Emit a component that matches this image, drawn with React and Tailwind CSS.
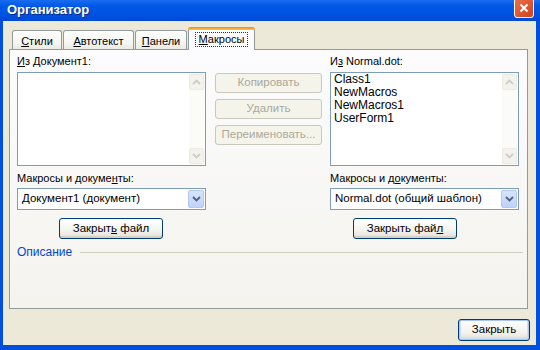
import React from "react";

function Chevron({ up, color }) {
  return (
    <svg width="9" height="6" viewBox="0 0 9 6">
      <path
        d={up ? "M1 5 L4.5 1.5 L8 5" : "M1 1 L4.5 4.5 L8 1"}
        fill="none"
        stroke={color}
        strokeWidth="1.8"
      />
    </svg>
  );
}

function ScrollBar() {
  return (
    <div className="w-[16px] h-full flex flex-col justify-between bg-[#fbfbf8] py-px pr-px">
      <div className="w-[15px] h-[16px] rounded-[2px] border border-[#ebeae3] bg-[#f3f2ec] flex items-center justify-center">
        <Chevron up color="#cdccc5" />
      </div>
      <div className="w-[15px] h-[16px] rounded-[2px] border border-[#ebeae3] bg-[#f3f2ec] flex items-center justify-center">
        <Chevron color="#cdccc5" />
      </div>
    </div>
  );
}

function ListBox({ items }) {
  return (
    <div className="mt-[4px] h-[94px] border border-[#7f9db9] bg-white flex">
      <div className="flex-1 pl-[3px] text-[12px] leading-[13px]">
        {items.map((it) => (
          <div key={it}>{it}</div>
        ))}
      </div>
      <ScrollBar />
    </div>
  );
}

function Combo({ text }) {
  return (
    <div className="mt-[3px] h-[22px] border border-[#7f9db9] bg-white flex items-center">
      <div className="flex-1 pl-[4px] text-[11.5px]">{text}</div>
      <div className="h-full py-px pr-px">
        <div className="w-[16px] h-full rounded-[2px] border border-[#b4c8f6] bg-[linear-gradient(to_bottom,#d8e4fd,#bfd2fb)] flex items-center justify-center">
          <Chevron color="#4d6185" />
        </div>
      </div>
    </div>
  );
}

function XpButton({ children, className = "", disabled = false, isDefault = false }) {
  if (disabled) {
    return (
      <div
        className={`h-[20px] rounded-[3px] border border-[#cac8bb] bg-[#f5f4ea] text-[#aca899] flex items-center justify-center ${className}`}
      >
        <span>{children}</span>
      </div>
    );
  }
  return (
    <div
      className={`rounded-[3px] border border-[#003c74] bg-[linear-gradient(to_bottom,#ffffff,#f4f3ee_60%,#e3e0d4)] flex items-center justify-center ${
        isDefault ? "shadow-[inset_0_0_0_1px_#a7c4f5,inset_0_-1px_0_2px_#cfdefb]" : "shadow-[inset_0_-2px_0_#d6d0c5]"
      } ${className}`}
    >
      <span>{children}</span>
    </div>
  );
}

function Tab({ children, active, className = "" }) {
  if (active) {
    return (
      <div
        className={`relative z-10 h-[23px] rounded-t-[3px] border-x border-[#919b9c] bg-[#fcfcfe] flex flex-col ${className}`}
      >
        <div className="h-[3px] -mx-px rounded-t-[3px] bg-[linear-gradient(to_bottom,#e68b2c,#ffc73c)]" />
        <div className="flex-1 flex items-center justify-center pb-[2px]">
          <span className="border border-dotted border-[#333] px-[3px] leading-[13px]">{children}</span>
        </div>
      </div>
    );
  }
  return (
    <div
      className={`h-[20px] rounded-t-[3px] border border-b-0 border-[#919b9c] bg-[linear-gradient(to_bottom,#ffffff,#f3f3ef_70%,#e9e8e0)] flex items-center justify-center pt-px ${className}`}
    >
      <span>{children}</span>
    </div>
  );
}

export default function App() {
  return (
    <div className="w-[540px] h-[350px] overflow-hidden flex flex-col bg-[#0050e0] font-['Liberation_Sans',Arial,sans-serif] text-[11px] text-black">
      {/* title bar */}
      <div className="h-[21px] flex items-start justify-between bg-[linear-gradient(to_bottom,#1a6cf0,#0058e6_30%,#0054e3_60%,#0049d6)] pl-[7px] pr-[6px]">
        <div className="pt-[2px] text-[13px] font-bold text-white leading-[16px] [text-shadow:1px_1px_0_#0a2a8a]">
          Организатор
        </div>
        <div className="mt-[-2px] w-[20px] h-[20px] rounded-[3px] border border-white bg-[linear-gradient(135deg,#e8704f,#d3401c)] flex items-center justify-center">
          <svg width="10" height="10" viewBox="0 0 10 10">
            <path d="M1.5 1.5 L8.5 8.5 M8.5 1.5 L1.5 8.5" stroke="white" strokeWidth="2" />
          </svg>
        </div>
      </div>

      {/* body */}
      <div className="flex-1 ml-[3px] mr-[4px] mb-[5px] bg-[#ece9d8] flex flex-col">
        {/* tabs */}
        <div className="mt-[6px] ml-[9px] h-[23px] -mb-px flex items-end gap-px">
          <Tab className="w-[50px]">
            <span className="underline">С</span>тили
          </Tab>
          <Tab className="w-[71px]">
            <span className="underline">А</span>втотекст
          </Tab>
          <Tab className="w-[52px]">
            <span className="underline">П</span>анели
          </Tab>
          <Tab active className="w-[67px]">
            <span className="underline">М</span>акросы
          </Tab>
        </div>

        {/* tab panel */}
        <div className="ml-[6px] w-[519px] h-[260px] border border-[#919b9c] bg-[linear-gradient(to_bottom,#fcfcfe,#f4f3ee)] pl-[7px] pt-[5px] pr-[4px] flex flex-col">
          <div className="flex">
            {/* left column */}
            <div className="w-[189px] flex flex-col">
              <div className="leading-[13px]">
                <span className="underline">И</span>з Документ1:
              </div>
              <ListBox items={[]} />
              <div className="mt-[6px] leading-[13px]">
                Макросы и докуме<span className="underline">н</span>ты:
              </div>
              <Combo text="Документ1 (документ)" />
              <XpButton className="mt-[8px] ml-[42px] w-[104px] h-[21px] text-[11.5px]">
                Закрыт<span className="underline">ь</span> файл
              </XpButton>
            </div>

            {/* middle column */}
            <div className="ml-[9px] w-[107px] pt-[18px] flex flex-col gap-[6px] text-[11.5px]">
              <XpButton disabled>Копировать</XpButton>
              <XpButton disabled>Удалить</XpButton>
              <XpButton disabled>Переименовать...</XpButton>
            </div>

            {/* right column */}
            <div className="ml-[8px] w-[189px] flex flex-col">
              <div className="leading-[13px]">
                И<span className="underline">з</span> Normal.dot:
              </div>
              <ListBox items={["Class1", "NewMacros", "NewMacros1", "UserForm1"]} />
              <div className="mt-[6px] leading-[13px]">
                Макросы и д<span className="underline">о</span>кументы:
              </div>
              <Combo text="Normal.dot (общий шаблон)" />
              <XpButton className="mt-[8px] ml-[23px] w-[104px] h-[21px] text-[11.5px]">
                Закрыть фай<span className="underline">л</span>
              </XpButton>
            </div>
          </div>

          {/* description */}
          <div className="mt-[7px] h-[13px] flex items-center">
            <span className="text-[#0046d5] text-[12px] leading-[13px]">Описание</span>
            <div className="flex-1 ml-[8px] h-px bg-[#d0d0bf]" />
          </div>
        </div>

        {/* footer */}
        <div className="mt-[10px] mr-[6px] flex justify-end">
          <XpButton isDefault className="w-[72px] h-[22px] text-[11.5px]">
            Закрыть
          </XpButton>
        </div>
      </div>
    </div>
  );
}
